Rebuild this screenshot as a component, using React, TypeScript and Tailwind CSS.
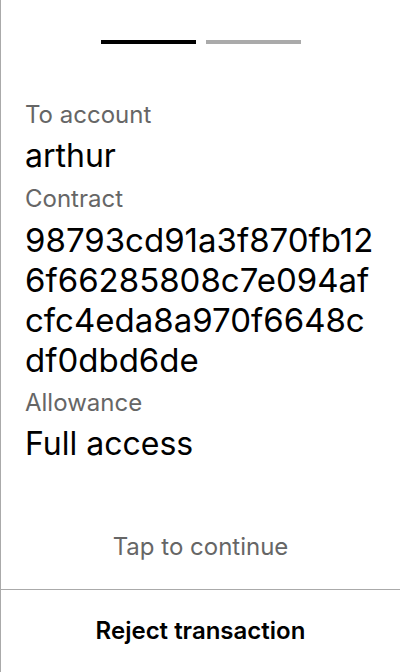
import React from "react";

export default function App() {
  return (
    <div
      className="h-[672px] w-[400px] flex flex-col border-l border-[#aaaaaa] bg-white text-black"
      style={{ fontFamily: "Inter, 'Noto Sans', sans-serif" }}
    >
      <div className="flex justify-center gap-[10px] pt-[40px]">
        <div className="h-[4px] w-[95px] bg-black" />
        <div className="h-[4px] w-[95px] bg-[#aaaaaa]" />
      </div>
      <div className="flex flex-col px-6 pt-[48px]">
        <div className="text-[24px] leading-[40px] text-[#666666] mt-[3px]">To account</div>
        <div className="text-[32px] leading-[40px] mt-[1px]">arthur</div>
        <div className="text-[24px] leading-[40px] text-[#666666] mt-[3px]">Contract</div>
        <div className="text-[33px] leading-[40px] break-all mt-[1px]">
          98793cd91a3f870fb126f66285808c7e094afcfc4eda8a970f6648cdf0dbd6de
        </div>
        <div className="text-[24px] leading-[40px] text-[#666666] mt-[3px]">Allowance</div>
        <div className="text-[32px] leading-[40px] mt-[1px]">Full access</div>
      </div>
      <div className="flex-1" />
      <div className="text-center text-[24px] leading-[32px] text-[#666666] pb-[26px]">
        Tap to continue
      </div>
      <div className="border-t border-[#aaaaaa] h-[83px] flex items-center justify-center">
        <span className="text-[24px] leading-[32px] font-semibold">Reject transaction</span>
      </div>
    </div>
  );
}
